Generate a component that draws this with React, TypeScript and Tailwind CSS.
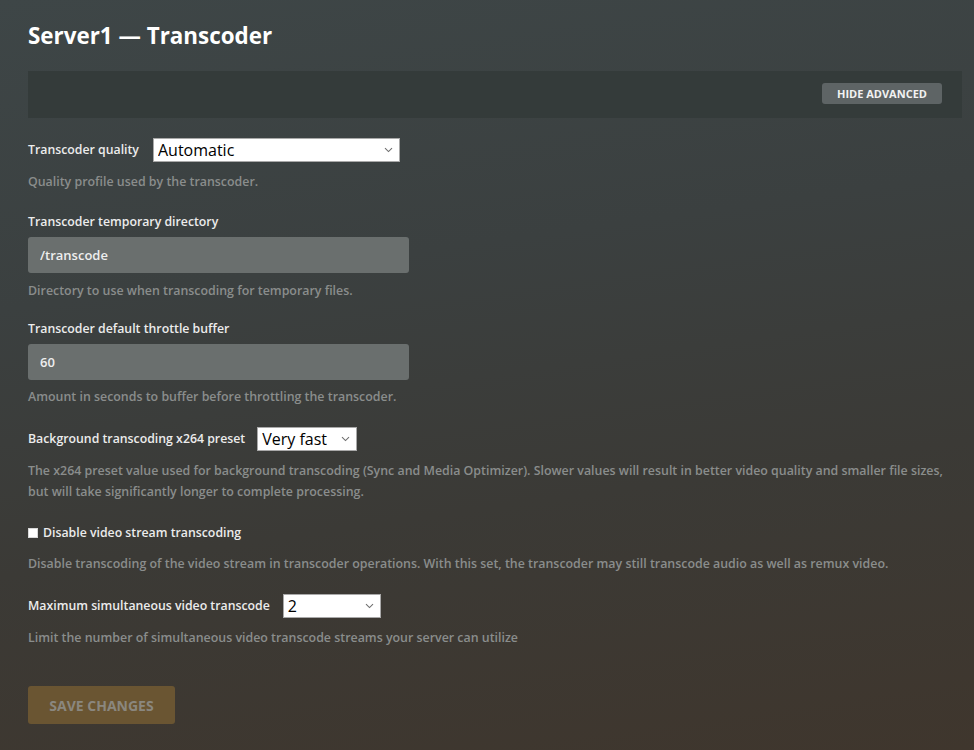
import { useState } from "react";

const font = { fontFamily: '"Open Sans", "Noto Sans", sans-serif' };

const Chevron = () => (
  <svg
    className="pointer-events-none absolute right-[7px] top-1/2 -translate-y-1/2"
    width="9"
    height="6"
    viewBox="0 0 9 6"
    fill="none"
  >
    <path d="M1 1.2 L4.5 4.6 L8 1.2" stroke="#6f6f6f" strokeWidth="1.1" />
  </svg>
);

type SelectProps = {
  value: string;
  options: string[];
  width: string;
  onChange: (v: string) => void;
};

const Select = ({ value, options, width, onChange }: SelectProps) => (
  <div className={`relative h-[24px] ${width}`}>
    <select
      value={value}
      onChange={(e) => onChange(e.target.value)}
      className="h-full w-full appearance-none rounded-none border border-[#a9a9a9] bg-white pl-[4px] pr-6 text-[16px] leading-[22px] text-black outline-none"
      style={font}
    >
      {options.map((o) => (
        <option key={o} value={o}>
          {o}
        </option>
      ))}
    </select>
    <Chevron />
  </div>
);

const Help = ({ children, className = "" }: { children: React.ReactNode; className?: string }) => (
  <p className={`text-[12.4px] font-semibold leading-[21px] text-[#8a8d8c] ${className}`}>{children}</p>
);

const Label = ({ children }: { children: React.ReactNode }) => (
  <span className="block text-[12.3px] font-semibold leading-[18px] text-[#ececec]">{children}</span>
);

const TextInput = ({ value, onChange }: { value: string; onChange: (v: string) => void }) => (
  <input
    value={value}
    onChange={(e) => onChange(e.target.value)}
    className="mt-[6px] block h-[36px] w-[381px] rounded-[3px] bg-[#6a6f6e] px-[12px] text-[13px] font-semibold text-[#eeeeee] outline-none"
    style={font}
  />
);

export default function App() {
  const [quality, setQuality] = useState("Automatic");
  const [dir, setDir] = useState("/transcode");
  const [buffer, setBuffer] = useState("60");
  const [preset, setPreset] = useState("Very fast");
  const [disableVideo, setDisableVideo] = useState(false);
  const [maxTranscode, setMaxTranscode] = useState("2");

  return (
    <div
      className="min-h-screen w-full bg-[linear-gradient(172deg,#3e4647_0%,#3b4040_35%,#3b3a36_65%,#3f362d_100%)] pl-[28px] pr-[12px] pt-[21px]"
      style={font}
    >
      <h1 className="text-[22.4px] font-bold leading-[30px] text-white">Server1 — Transcoder</h1>

      <div className="mt-[20px] flex h-[47px] items-start justify-end bg-[#343b3a] pr-[20px] pt-[12px]">
        <button className="h-[21px] w-[120px] rounded-[3px] bg-[#5e6465] text-[11px] font-bold uppercase leading-[21px] text-[#f2f2f2]">
          Hide Advanced
        </button>
      </div>

      <div className="mt-[20px] flex h-[24px] items-center gap-[14px]">
        <Label>Transcoder quality</Label>
        <Select
          value={quality}
          onChange={setQuality}
          width="w-[247px]"
          options={["Automatic", "Prefer higher speed encoding", "Prefer higher quality encoding", "Make my CPU hurt"]}
        />
      </div>
      <Help className="mt-[9px]">Quality profile used by the transcoder.</Help>

      <div className="mt-[21px]">
        <Label>Transcoder temporary directory</Label>
        <TextInput value={dir} onChange={setDir} />
      </div>
      <Help className="mt-[7px]">Directory to use when transcoding for temporary files.</Help>

      <div className="mt-[19px]">
        <Label>Transcoder default throttle buffer</Label>
        <TextInput value={buffer} onChange={setBuffer} />
      </div>
      <Help className="mt-[6px]">Amount in seconds to buffer before throttling the transcoder.</Help>

      <div className="mt-[20px] flex h-[24px] items-center gap-[12px]">
        <Label>Background transcoding x264 preset</Label>
        <Select
          value={preset}
          onChange={setPreset}
          width="w-[100px]"
          options={["Ultra fast", "Super fast", "Very fast", "Faster", "Fast", "Medium", "Slow", "Slower", "Very slow"]}
        />
      </div>
      <Help className="mt-[9px] pr-[18px]">
        The x264 preset value used for background transcoding (Sync and Media Optimizer). Slower values will result in
        better video quality and smaller file sizes, but will take significantly longer to complete processing.
      </Help>

      <label className="mt-[22px] flex h-[18px] cursor-pointer items-center gap-[5px]">
        <input
          type="checkbox"
          checked={disableVideo}
          onChange={(e) => setDisableVideo(e.target.checked)}
          className="sr-only"
        />
        <span className="flex h-[10px] w-[10px] items-center justify-center border border-[#d8d8d8] bg-white">
          {disableVideo && <span className="h-[6px] w-[6px] bg-black" />}
        </span>
        <Label>Disable video stream transcoding</Label>
      </label>
      <Help className="mt-[11px]">
        Disable transcoding of the video stream in transcoder operations. With this set, the transcoder may still
        transcode audio as well as remux video.
      </Help>

      <div className="mt-[20px] flex h-[24px] items-center gap-[13px]">
        <Label>Maximum simultaneous video transcode</Label>
        <Select
          value={maxTranscode}
          onChange={setMaxTranscode}
          width="w-[98px]"
          options={["Unlimited", "1", "2", "3", "4", "5", "6", "7", "8"]}
        />
      </div>
      <Help className="mt-[9px]">Limit the number of simultaneous video transcode streams your server can utilize</Help>

      <button
        disabled
        className="mt-[38px] h-[38px] w-[147px] rounded-[3px] bg-[#6a5532] text-[14px] font-bold uppercase text-[#8a877f]"
      >
        Save Changes
      </button>
    </div>
  );
}
